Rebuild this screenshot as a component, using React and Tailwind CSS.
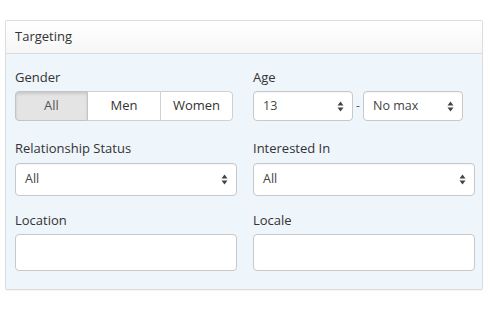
import React from "react";

const Arrows = () => (
  <svg width="7" height="11" viewBox="0 0 7 11" className="shrink-0">
    <path d="M3.5 0.5 L6.5 4.5 L0.5 4.5 Z" fill="#444" />
    <path d="M3.5 10.5 L6.5 6.5 L0.5 6.5 Z" fill="#444" />
  </svg>
);

const Select = ({ value, className }) => (
  <div
    className={
      "flex items-center justify-between bg-white border border-[#c8c8c8] rounded-[4px] pl-[9px] pr-[8px] text-[12.5px] text-[#444] shadow-[inset_0_1px_1px_rgba(0,0,0,0.04)] " +
      className
    }
  >
    <span>{value}</span>
    <Arrows />
  </div>
);

const Label = ({ children, className }) => (
  <div className={"h-[18px] leading-[18px] text-[13px] text-[#333] " + (className || "")}>{children}</div>
);

export default function App() {
  return (
    <div
      className="w-[490px] h-[310px] bg-white pt-[20px] pl-[5px]"
      style={{ fontFamily: '"Open Sans", "Liberation Sans", sans-serif' }}
    >
      <div className="w-[478px] h-[270px] border border-[#dcdcdc] rounded-[2px] bg-[#eef5fb] shadow-[0_1px_1px_rgba(0,0,0,0.04)] overflow-hidden">
        <div className="h-[33px] bg-gradient-to-b from-white to-[#f6f6f6] border-b border-[#dcdcdc] pl-[9px] flex items-center text-[13px] text-[#333]">
          Targeting
        </div>
        <div className="pl-[9px] pr-[7px] pt-[14px] grid grid-cols-[222px_222px] gap-x-[16px]">
          <div>
            <Label className="mb-[5px]">Gender</Label>
            <div className="flex h-[30px] w-[218px] text-[13px] text-[#333]">
              <div className="w-[73px] flex items-center justify-center bg-[#e4e4e4] border border-[#c4c4c4] rounded-l-[4px] shadow-[inset_0_2px_3px_rgba(0,0,0,0.12)] text-[#555]">
                All
              </div>
              <div className="w-[72px] flex items-center justify-center bg-white border-y border-[#d0d0d0]">
                Men
              </div>
              <div className="w-[73px] flex items-center justify-center bg-white border border-[#d0d0d0] rounded-r-[4px]">
                Women
              </div>
            </div>
          </div>
          <div>
            <Label className="mb-[5px]">Age</Label>
            <div className="flex items-center h-[30px]">
              <Select value="13" className="w-[100px] h-[30px]" />
              <span className="w-[10px] text-center text-[12px] text-[#555]">-</span>
              <Select value="No max" className="w-[100px] h-[30px]" />
            </div>
          </div>

          <div className="mt-[18px]">
            <Label className="mb-[6px]">Relationship Status</Label>
            <Select value="All" className="w-[222px] h-[33px]" />
          </div>
          <div className="mt-[18px]">
            <Label className="mb-[6px]">Interested In</Label>
            <Select value="All" className="w-[222px] h-[33px]" />
          </div>

          <div className="mt-[15px]">
            <Label className="mb-[5px]">Location</Label>
            <div className="w-[222px] h-[37px] bg-white border border-[#c8c8c8] rounded-[4px]" />
          </div>
          <div className="mt-[15px]">
            <Label className="mb-[5px]">Locale</Label>
            <div className="w-[222px] h-[37px] bg-white border border-[#c8c8c8] rounded-[4px]" />
          </div>
        </div>
      </div>
    </div>
  );
}
